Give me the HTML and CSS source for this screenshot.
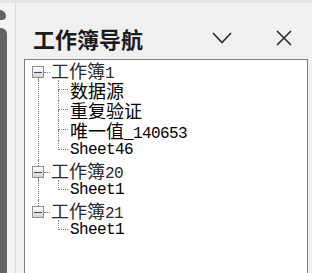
FILE: index.html
```html
<!DOCTYPE html>
<html lang="zh-CN">
<head>
    <meta charset="UTF-8">
    <meta name="viewport" content="width=device-width, initial-scale=1.0">
    <title>工作簿导航</title>
    <link rel="stylesheet" href="styles.css">
</head>
<body>
    <div class="topline"></div>
    <div class="main">
        <div class="side">
            <div class="thumb small"></div>
            <div class="thumb big"></div>
        </div>
        <div class="pane">
            <div class="head">
                <h1 class="title">工作簿导航</h1>
                <button class="icon-btn" title="折叠">
                    <svg width="20" height="12" viewBox="0 0 20 12"><polyline points="1,1 10,10.5 19,1" fill="none" stroke="#2b2b2b" stroke-width="1.6"/></svg>
                </button>
                <button class="icon-btn" title="关闭">
                    <svg width="16" height="16" viewBox="0 0 16 16"><path d="M1 1 L15 15 M15 1 L1 15" fill="none" stroke="#2b2b2b" stroke-width="1.6"/></svg>
                </button>
            </div>
            <div class="tree">
                <!-- 工作簿1 -->
                <div class="row">
                    <span class="exp"><i class="stub top"></i><span class="box"></span><i class="stub bottom on"></i></span>
                    <span class="hl"></span>
                    <span class="label root">工作簿<span class="en">1</span></span>
                </div>
                <div class="kids more">
                    <div class="row"><span class="conn"><i class="up"></i><i class="down on"></i></span><span class="label">数据源</span></div>
                    <div class="row"><span class="conn"><i class="up"></i><i class="down on"></i></span><span class="label">重复验证</span></div>
                    <div class="row"><span class="conn"><i class="up"></i><i class="down on"></i></span><span class="label">唯一值<span class="en">_140653</span></span></div>
                    <div class="row"><span class="conn"><i class="up"></i><i class="down"></i></span><span class="label en">Sheet46</span></div>
                </div>

                <!-- 工作簿20 -->
                <div class="row">
                    <span class="exp"><i class="stub top on"></i><span class="box"></span><i class="stub bottom on"></i></span>
                    <span class="hl"></span>
                    <span class="label root">工作簿<span class="en">20</span></span>
                </div>
                <div class="kids more">
                    <div class="row"><span class="conn"><i class="up"></i><i class="down"></i></span><span class="label en">Sheet1</span></div>
                </div>

                <!-- 工作簿21 -->
                <div class="row">
                    <span class="exp"><i class="stub top on"></i><span class="box"></span><i class="stub bottom"></i></span>
                    <span class="hl"></span>
                    <span class="label root">工作簿<span class="en">21</span></span>
                </div>
                <div class="kids">
                    <div class="row"><span class="conn"><i class="up"></i><i class="down"></i></span><span class="label en">Sheet1</span></div>
                </div>
            </div>
        </div>
    </div>
</body>
</html>
```

FILE: styles.css
```css
body {
    margin: 0;
    width: 312px;
    height: 273px;
    overflow: hidden;
    background: #f0f0f0;
    font-family: "Noto Sans CJK SC", "Liberation Sans", sans-serif;
    display: flex;
    flex-direction: column;
}
.topline {
    height: 3px;
    background: #e9e4e8;
}
.main {
    flex: 1;
    display: flex;
    min-height: 0;
}
.side {
    width: 15px;
    background: #f4f4f4;
    border-right: 1px solid #e2dadf;
    display: flex;
    flex-direction: column;
}
.thumb {
    background: #646464;
    border-top-right-radius: 6px;
}
.thumb.small {
    width: 6px;
    height: 10px;
    margin-top: 7px;
    border-bottom-right-radius: 4px;
}
.thumb.big {
    width: 7px;
    flex: 1;
    margin-top: 8px;
}
.pane {
    flex: 1;
    display: flex;
    flex-direction: column;
    min-width: 0;
}
.head {
    height: 43px;
    padding: 13px 8px 0 17px;
    display: flex;
    align-items: center;
}
.title {
    flex: 1;
    margin: 0;
    font-size: 22px;
    font-weight: bold;
    color: #1b1b1b;
    line-height: 28px;
}
.icon-btn {
    width: 40px;
    height: 28px;
    padding: 0;
    border: none;
    background: none;
    display: flex;
    align-items: center;
    justify-content: center;
}
.icon-btn + .icon-btn {
    margin-left: 22px;
}
.tree {
    flex: 1;
    margin: 0 4px 0 8px;
    padding: 0 0 0 7px;
    background: #fff;
    border: 1px solid #7b7b85;
    border-bottom: none;
}
.row {
    height: 20px;
    display: flex;
    align-items: flex-start;
}
.exp {
    width: 12px;
    display: flex;
    flex-direction: column;
}
.stub {
    display: block;
    width: 7px;
    box-sizing: border-box;
}
.stub.top {
    height: 6px;
}
.stub.bottom {
    height: 2px;
}
.stub.on {
    border-right: 1px dotted #808080;
}
.box {
    width: 12px;
    height: 12px;
    box-sizing: border-box;
    border: 1px solid #8e8f8f;
    background: linear-gradient(#ffffff, #d4d4d4);
    display: flex;
    align-items: center;
    justify-content: center;
}
.box::after {
    content: "";
    width: 8px;
    height: 1px;
    background: #2f4f8a;
}
.hl {
    width: 6px;
    margin: 12px 1px 0 0;
    border-top: 1px dotted #808080;
}
.label {
    font-size: 18px;
    line-height: 20px;
    color: #000;
    white-space: nowrap;
}
.label.root {
    color: #2a2a2a;
}
.en {
    font-family: "Liberation Mono", monospace;
    font-size: 16px;
    letter-spacing: -0.6px;
}
.kids {
    margin-left: 6px;
    padding-left: 19px;
    border-left: 1px solid transparent;
}
.kids.more {
    border-left: 1px dotted #808080;
}
.conn {
    width: 10px;
    margin-right: 2px;
    display: flex;
    flex-direction: column;
}
.conn i {
    display: block;
    height: 10px;
    box-sizing: border-box;
}
.conn .up {
    border-left: 1px dotted #808080;
    border-bottom: 1px dotted #808080;
}
.conn .down.on {
    border-left: 1px dotted #808080;
}
```
